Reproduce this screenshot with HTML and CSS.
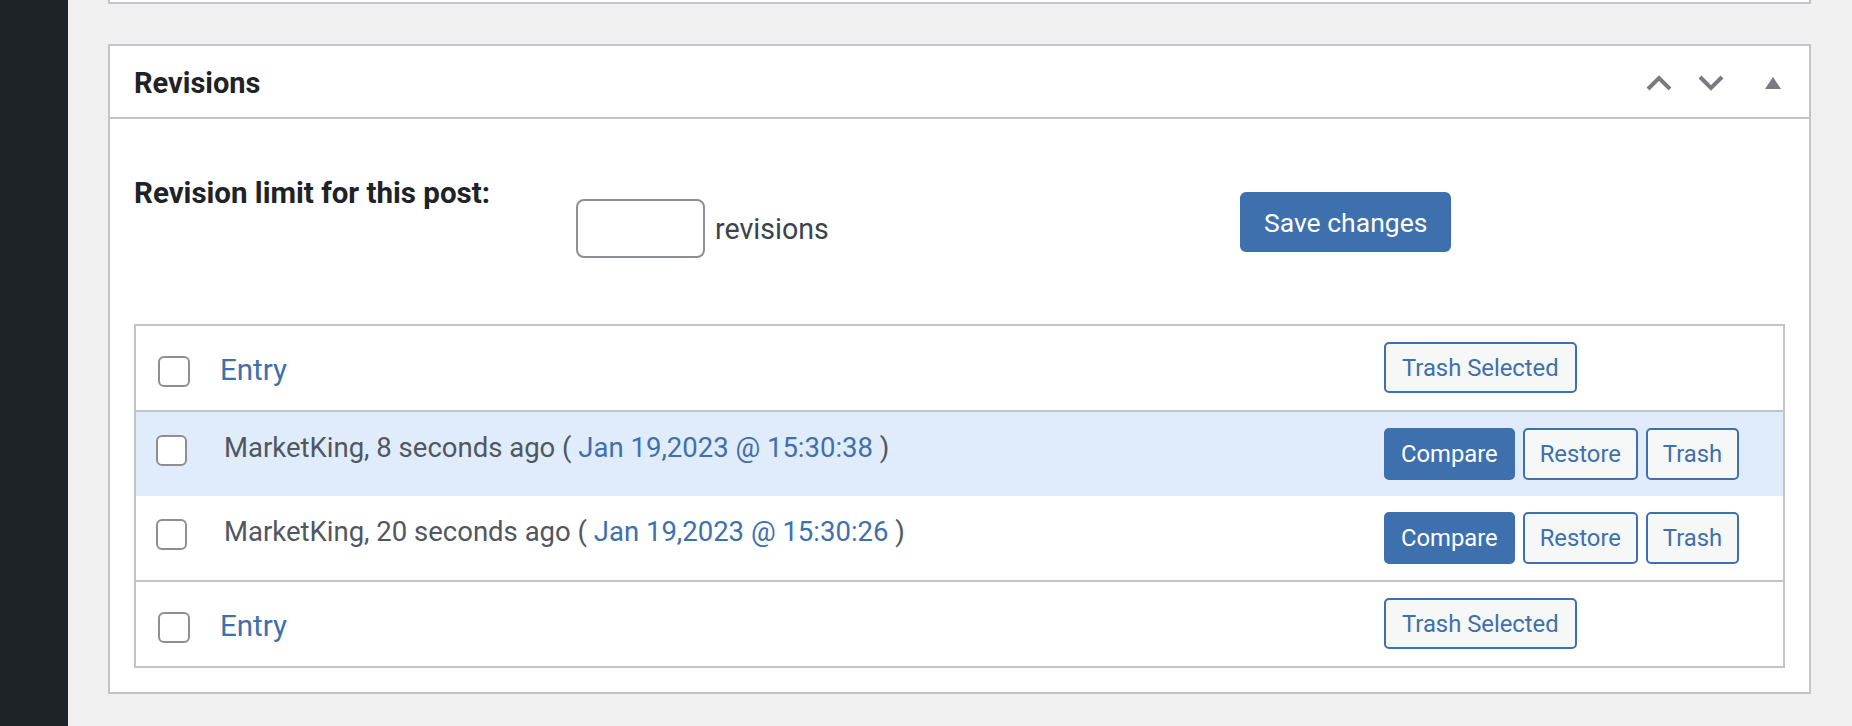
FILE: index.html
```html
<!DOCTYPE html>
<html lang="en">
<head>
<meta charset="utf-8">
<title>Revisions</title>
<link rel="stylesheet" href="styles.css">
</head>
<body>
<div class="sidebar"></div>
<div class="content">
  <div class="prev-box"></div>
  <div class="panel">
    <div class="panel-head">
      <h2 class="panel-title">Revisions</h2>
      <div class="handles">
        <span class="hbtn"><svg width="26" height="16" viewBox="0 0 26 16"><polyline points="2,14 13,3 24,14" fill="none" stroke="#787c82" stroke-width="4"/></svg></span>
        <span class="hbtn"><svg width="26" height="16" viewBox="0 0 26 16"><polyline points="2,2 13,13 24,2" fill="none" stroke="#787c82" stroke-width="4"/></svg></span>
        <span class="hbtn hbtn-last"><svg width="16" height="12" viewBox="0 0 16 12"><polygon points="8,0 16,12 0,12" fill="#787c82"/></svg></span>
      </div>
    </div>
    <div class="panel-body">
      <div class="limit-row">
        <div class="limit-label">Revision limit for this post:</div>
        <div class="limit-field">
          <input class="limit-input" type="text">
          <span class="limit-unit">revisions</span>
        </div>
        <div class="limit-save"><button class="btn-primary btn-save">Save changes</button></div>
      </div>
      <div class="rev-table">
        <div class="row row-entry row-bottom-border">
          <div class="cell-check"><input class="check" type="checkbox"></div>
          <div class="cell-main"><a class="entry-link">Entry</a></div>
          <div class="cell-actions"><button class="btn btn-secondary btn-wide">Trash Selected</button></div>
        </div>
        <div class="row row-rev row-highlight">
          <div class="cell-check"><input class="check" type="checkbox"></div>
          <div class="cell-main rev-text">MarketKing, 8 seconds ago ( <a class="date-link">Jan 19,2023 @ 15:30:38</a> )</div>
          <div class="cell-actions">
            <button class="btn btn-primary">Compare</button>
            <button class="btn btn-secondary">Restore</button>
            <button class="btn btn-secondary">Trash</button>
          </div>
        </div>
        <div class="row row-rev row-bottom-border">
          <div class="cell-check"><input class="check" type="checkbox"></div>
          <div class="cell-main rev-text">MarketKing, 20 seconds ago ( <a class="date-link">Jan 19,2023 @ 15:30:26</a> )</div>
          <div class="cell-actions">
            <button class="btn btn-primary">Compare</button>
            <button class="btn btn-secondary">Restore</button>
            <button class="btn btn-secondary">Trash</button>
          </div>
        </div>
        <div class="row row-entry">
          <div class="cell-check"><input class="check" type="checkbox"></div>
          <div class="cell-main"><a class="entry-link">Entry</a></div>
          <div class="cell-actions"><button class="btn btn-secondary btn-wide">Trash Selected</button></div>
        </div>
      </div>
    </div>
  </div>
</div>
</body>
</html>
```
FILE: styles.css
```css
* { box-sizing: border-box; }
html, body { margin: 0; padding: 0; }
body {
  display: flex;
  height: 726px;
  overflow: hidden;
  background: #f0f0f1;
  font-family: Roboto, "Liberation Sans", Arial, sans-serif;
  color: #1d2327;
}
.sidebar {
  width: 68px;
  flex: none;
  background: #1e2328;
}
.content {
  width: 1703px;
  margin-left: 40px;
  flex: none;
}
.prev-box {
  height: 4px;
  background: #fff;
  border: 2px solid #c3c4c7;
  border-top: none;
}
.panel {
  margin-top: 40px;
  background: #fff;
  border: 2px solid #c3c4c7;
}
.panel-head {
  height: 73px;
  border-bottom: 2px solid #c3c4c7;
  display: flex;
  align-items: center;
  justify-content: space-between;
  padding-left: 24px;
}
.panel-title {
  margin: 0;
  font-size: 29px;
  font-weight: 700;
  color: #1d2327;
  line-height: 1;
  padding-top: 3px;
}
.handles {
  display: flex;
  align-items: center;
  padding-top: 3px;
}
.hbtn {
  width: 52px;
  height: 52px;
  display: flex;
  align-items: center;
  justify-content: center;
}
.hbtn-last { width: 72px; }
.panel-body {
  padding: 56px 24px 24px;
}
.limit-row {
  display: grid;
  grid-template-columns: 442px 664px auto;
  align-items: start;
}
.limit-label {
  font-size: 29.5px;
  font-weight: 700;
  line-height: 1.3;
  color: #1d2327;
  margin-top: -1px;
}
.limit-field {
  display: flex;
  align-items: center;
  margin-top: 24px;
}
.limit-input {
  width: 129px;
  height: 59px;
  border: 2px solid #8c8f94;
  border-radius: 8px;
  background: #fff;
  margin: 0;
  padding: 0 10px;
  font: inherit;
}
.limit-unit {
  margin-left: 10px;
  font-size: 28.6px;
  color: #3c434a;
}
.limit-save { margin-top: 17px; }
.btn-save {
  height: 60px;
  padding: 0 22px;
  border-radius: 6px;
  font-size: 26.5px;
}
.rev-table {
  margin-top: 66px;
  border: 2px solid #c3c4c7;
}
.row {
  display: flex;
  align-items: flex-start;
  height: 84px;
}
.row-bottom-border {
  height: 86px;
  border-bottom: 2px solid #c3c4c7;
}
.row-highlight { background: #e0ecfb; }
.cell-check { flex: none; }
.row-entry .cell-check { width: 84px; padding: 30px 0 0 22px; }
.row-rev .cell-check { width: 88px; padding: 23px 0 0 20px; }
.check {
  -webkit-appearance: none;
  appearance: none;
  display: block;
  margin: 0;
  width: 32px;
  height: 31px;
  border: 2px solid #8c8f94;
  border-radius: 6px;
  background: #fff;
}
.row-rev .check { width: 31px; }
.cell-main {
  flex: 1;
  line-height: 1.3;
}
.row-entry .cell-main { padding-top: 25px; }
.row-rev .cell-main { padding-top: 18px; }
.entry-link {
  font-size: 29.5px;
  color: #3e70ad;
  text-decoration: none;
}
.rev-text {
  font-size: 27.5px;
  color: #50575e;
}
.date-link {
  color: #3e70ad;
  text-decoration: none;
}
.cell-actions {
  width: 399px;
  flex: none;
  display: flex;
  gap: 8px;
  padding-top: 16px;
}
.btn, .btn-primary, .btn-secondary {
  font-family: inherit;
  margin: 0;
  cursor: pointer;
}
.btn {
  height: 52px;
  padding: 0 15px;
  border-radius: 5px;
  font-size: 23.8px;
  border: 2px solid #3e70ad;
}
.btn-wide { padding: 0 16px; }
.btn-primary {
  background: #3e70ad;
  color: #fff;
  border: 2px solid #3e70ad;
}
.btn-secondary {
  background: #f6f7f7;
  color: #3e70ad;
}
.row-entry .btn { height: 51px; }
```
